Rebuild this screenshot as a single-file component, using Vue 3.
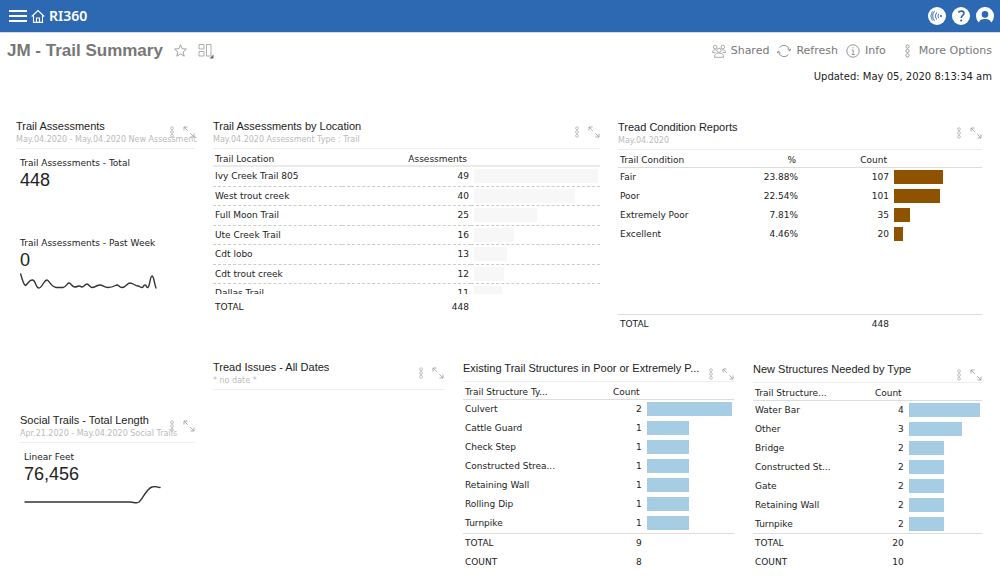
<script setup>
const metricPanels = [
  {
    id: 'assessments',
    title: 'Trail Assessments',
    sub: 'May.04.2020 - May.04.2020 New Assessment',
    metrics: [
      { label: 'Trail Assessments - Total', value: '448' },
      {
        label: 'Trail Assessments - Past Week',
        value: '0',
        path: 'M0.700 2C2 7 4 13 5.500 13.500C7 13 9 8 12 8C16 7 15 16 19 16C22 16 24 8 27 8C29 8 31 15 36 15.500H43C46 15.500 47 11 49 11C51 11 52 15 55 15C57 15 57 14 59 14C61 14 61 15 62 15C64 15 65 12 67 12C69 12 70 15.500 72 15.500C75 15.500 77 13 80 13C83 13 84 15.500 88 15.500C94 15.500 95 13 97 13C99 13 99 15.500 102 15.500C106 15.500 107 11 110 11C113 11 115 14 118 14C120 14 120 15.500 122 15.500C124 15.500 123 13 125 13C127 13 126 16 128 15.500C130 14 130 4 132 4C134 4 134 11 136 16',
      },
    ],
  },
  {
    id: 'social',
    title: 'Social Trails - Total Length',
    sub: 'Apr.21.2020 - May.04.2020 Social Trails',
    metrics: [
      {
        label: 'Linear Feet',
        value: '76,456',
        path: 'M1 16H106C110 16 112 18 115 16C119 13 122 3 128 1C131 0 133 1 136 1.500',
      },
    ],
  },
]

const scaled = (rows, max) =>
  rows.map(([name, ...values]) => ({
    name,
    values,
    width: (Number(values[values.length - 1]) / max) * 100 + '%',
  }))

const reportRows = [
  {
    id: 'upper',
    panels: [
      {
        id: 'location',
        title: 'Trail Assessments by Location',
        sub: 'May.04.2020 Assessment Type : Trail',
        heads: ['Trail Location', 'Assessments'],
        rows: scaled(
          [
            ['Ivy Creek Trail 805', '49'],
            ['West trout creek', '40'],
            ['Full Moon Trail', '25'],
            ['Ute Creek Trail', '16'],
            ['Cdt lobo', '13'],
            ['Cdt trout creek', '12'],
            ['Dallas Trail', '11'],
          ],
          49
        ),
        totals: [['TOTAL', '448']],
      },
      {
        id: 'condition',
        title: 'Tread Condition Reports',
        sub: 'May.04.2020',
        heads: ['Trail Condition', '%', 'Count'],
        rows: scaled(
          [
            ['Fair', '23.88%', '107'],
            ['Poor', '22.54%', '101'],
            ['Extremely Poor', '7.81%', '35'],
            ['Excellent', '4.46%', '20'],
          ],
          188
        ),
        totals: [['TOTAL', '', '448']],
      },
    ],
  },
  {
    id: 'lower',
    panels: [
      { id: 'issues', title: 'Tread Issues - All Dates', sub: '* no date *' },
      {
        id: 'existing',
        title: 'Existing Trail Structures in Poor or Extremely P...',
        heads: ['Trail Structure Ty...', 'Count'],
        rows: scaled(
          [
            ['Culvert', '2'],
            ['Cattle Guard', '1'],
            ['Check Step', '1'],
            ['Constructed Strea...', '1'],
            ['Retaining Wall', '1'],
            ['Rolling Dip', '1'],
            ['Turnpike', '1'],
          ],
          2
        ),
        totals: [['TOTAL', '9'], ['COUNT', '8']],
      },
      {
        id: 'needed',
        title: 'New Structures Needed by Type',
        heads: ['Trail Structure...', 'Count'],
        rows: scaled(
          [
            ['Water Bar', '4'],
            ['Other', '3'],
            ['Bridge', '2'],
            ['Constructed St...', '2'],
            ['Gate', '2'],
            ['Retaining Wall', '2'],
            ['Turnpike', '2'],
          ],
          4
        ),
        totals: [['TOTAL', '20'], ['COUNT', '10']],
      },
    ],
  },
]
</script>

<template>
  <div class="page">
    <svg class="defs" aria-hidden="true">
      <symbol id="dots" viewBox="0 0 6 12">
        <g fill="none" stroke="currentColor" stroke-width="0.6">
          <circle cx="3" cy="2.200" r="1.400" /><circle cx="3" cy="6" r="1.400" /><circle cx="3" cy="9.800" r="1.400" />
        </g>
      </symbol>
      <symbol id="expand" viewBox="0 0 12 12">
        <path d="M1 4.500V1H4.500M1 1L4.700 4.700M11 7.500V11H7.500M11 11L7.300 7.300" fill="none" stroke="currentColor" stroke-width="0.8" />
      </symbol>
    </svg>

    <header class="topbar">
      <button class="icon" aria-label="Menu">
        <svg width="18" height="12" viewBox="0 0 18 12"><path d="M0 1H18M0 6H18M0 11H18" stroke="#fff" stroke-width="2" /></svg>
      </button>
      <a class="brand" href="#">
        <svg width="14" height="14" viewBox="0 0 14 14" fill="none" stroke="#fff" stroke-width="1.100">
          <path d="M0.700 7.500L7 1.500L13.300 7.500M2.500 6V13.400H11.500V6M5.500 13V9H8.500V13" />
        </svg>
        <span>RI360</span>
      </a>
      <div class="account">
        <button class="icon" aria-label="Broadcast">
          <svg width="18" height="18" viewBox="0 0 18 18">
            <circle cx="9" cy="9" r="9" fill="#fff" />
            <circle cx="13" cy="9" r="1.100" fill="#2d69b3" />
            <path d="M10.800 6.800Q9 9 10.800 11.200M8.700 5.300Q5.800 9 8.700 12.700M6.500 4Q2.800 9 6.500 14M4.400 4.500Q1.400 9 4.400 13.500" fill="none" stroke="#2d69b3" stroke-width="0.9" />
          </svg>
        </button>
        <button class="icon" aria-label="Help">
          <svg width="18" height="18" viewBox="0 0 18 18">
            <circle cx="9" cy="9" r="9" fill="#fff" />
            <path d="M6.300 5.500C7.500 3.500 12 3.500 12 6.300C12 8.500 9.200 8.300 9.200 11" fill="none" stroke="#2d69b3" stroke-width="1.600" />
            <circle cx="9.200" cy="13.600" r="1.100" fill="#2d69b3" />
          </svg>
        </button>
        <button class="icon" aria-label="Profile">
          <svg width="18" height="18" viewBox="0 0 18 18">
            <path d="M2.900 15.600A9 9 0 1 1 15.100 15.600C14.500 13 12.500 12 9 12C5.500 12 3.500 13 2.900 15.600Z" fill="#fff" />
            <circle cx="9" cy="7.400" r="3.300" fill="#2d69b3" />
          </svg>
        </button>
      </div>
    </header>

    <div class="titlebar">
      <h1>JM - Trail Summary</h1>
      <button class="icon" aria-label="Favorite">
        <svg width="13" height="13" viewBox="0 0 13 13"><path d="M6.500 0.800L8.200 4.700L12.400 5.100L9.200 7.900L10.200 12.200L6.500 9.900L2.800 12.200L3.800 7.900L0.600 5.100L4.800 4.700Z" fill="none" stroke="#999" stroke-width="0.9" /></svg>
      </button>
      <button class="icon" aria-label="Layout">
        <svg width="16" height="16" viewBox="0 0 16 16">
          <path d="M1 1.500H6V6H1ZM1 8.500H6V13H1ZM8.500 1.500H13V13H8.500Z" fill="none" stroke="#999" stroke-width="0.8" />
          <path d="M15.500 11.500V15.500H11.500Z" fill="#666" />
        </svg>
      </button>
      <nav class="actions">
        <button>
          <svg width="14" height="14" viewBox="0 0 14 14" fill="none" stroke="#999" stroke-width="0.8">
            <circle cx="3.200" cy="3" r="1.800" /><circle cx="10.800" cy="3" r="1.800" /><circle cx="7" cy="6.300" r="2.100" />
            <path d="M0.500 8.500C0.500 6 2.500 5.300 4.500 6M13.500 8.500C13.500 6 11.500 5.300 9.500 6M0.500 8.500H3.500M13.500 8.500H10.500M2.500 13.300C2.500 10 4 9 7 9C10 9 11.500 10 11.500 13.300Z" />
          </svg>
          Shared
        </button>
        <button>
          <svg width="14" height="14" viewBox="0 0 14 14" fill="none" stroke="#888" stroke-width="0.9">
            <path d="M2.500 3.500A5.600 5.600 0 0 1 12.500 6.500M10.400 5L12.600 7L14 4.600M11.500 10.500A5.600 5.600 0 0 1 1.500 7.500M0 9.400L1.400 7L3.600 9" />
          </svg>
          Refresh
        </button>
        <button>
          <svg width="14" height="14" viewBox="0 0 14 14" fill="none" stroke="#888" stroke-width="0.9">
            <circle cx="7" cy="7" r="6.200" /><path d="M5.800 6H7.200V10.500M5.600 10.500H8.800M6.500 3.800H7.700" />
          </svg>
          Info
        </button>
        <button class="more">
          <svg width="7" height="14"><use href="#dots" /></svg>
          More Options
        </button>
      </nav>
    </div>
    <p class="updated">Updated: May 05, 2020 8:13:34 am</p>

    <main>
      <div class="metrics">
        <section v-for="p in metricPanels" :key="p.id" class="panel" :class="p.id">
          <div class="head">
            <h2>{{ p.title }}</h2>
            <p>{{ p.sub }}</p>
            <div class="tools">
              <button class="icon" aria-label="Panel options"><svg width="6" height="12"><use href="#dots" /></svg></button>
              <button class="icon" aria-label="Expand panel"><svg width="12" height="12"><use href="#expand" /></svg></button>
            </div>
          </div>
          <div v-for="m in p.metrics" :key="m.label" class="metric">
            <h3>{{ m.label }}</h3>
            <strong>{{ m.value }}</strong>
            <svg v-if="m.path" width="137" height="18" viewBox="0 0 137 18">
              <path :d="m.path" fill="none" stroke="#333" stroke-width="1.400" stroke-linecap="round" />
            </svg>
          </div>
        </section>
      </div>

      <div class="reports">
        <div v-for="row in reportRows" :key="row.id" class="row" :class="row.id">
          <section v-for="p in row.panels" :key="p.id" class="panel" :class="p.id">
            <div class="head">
              <h2>{{ p.title }}</h2>
              <p v-if="p.sub">{{ p.sub }}</p>
              <div class="tools">
                <button class="icon" aria-label="Panel options"><svg width="6" height="12"><use href="#dots" /></svg></button>
                <button class="icon" aria-label="Expand panel"><svg width="12" height="12"><use href="#expand" /></svg></button>
              </div>
            </div>
            <div v-if="p.rows" class="body">
              <table>
                <thead>
                  <tr>
                    <th v-for="h in p.heads" :key="h" scope="col">{{ h }}</th>
                    <td></td>
                  </tr>
                </thead>
                <tbody>
                  <tr v-for="r in p.rows" :key="r.name">
                    <td>{{ r.name }}</td>
                    <td v-for="v in r.values" :key="v" class="num">{{ v }}</td>
                    <td class="chart"><div class="bar" :style="{ width: r.width }"></div></td>
                  </tr>
                </tbody>
              </table>
            </div>
            <table v-if="p.totals" class="totals">
              <tbody>
                <tr v-for="t in p.totals" :key="t[0]">
                  <th scope="row">{{ t[0] }}</th>
                  <td v-for="(v, i) in t.slice(1)" :key="i" class="num">{{ v }}</td>
                  <td></td>
                </tr>
              </tbody>
            </table>
          </section>
        </div>
      </div>
    </main>
  </div>
</template>

<style>
body {
  margin: 0;
  background: #fff;
}
</style>

<style scoped>
.page {
  font: 9px/12px "DejaVu Sans", Verdana, sans-serif;
  color: #222;
}
.defs {
  position: absolute;
  width: 0;
  height: 0;
}
h1, h2, h3, p {
  margin: 0;
  font-weight: normal;
}
h3 {
  font-size: 9px;
}
button {
  padding: 0;
  border: 0;
  background: none;
  font: inherit;
  color: inherit;
}
svg {
  display: block;
  flex: none;
}
.topbar {
  display: flex;
  align-items: center;
  gap: 4px;
  height: 32px;
  padding: 0 6px 0 9px;
  background: #2d69b3;
  border-bottom: 1px solid #d5dbe4;
}
.brand {
  display: flex;
  align-items: center;
  gap: 4px;
  color: #fff;
  font: 600 14px/20px "Noto Sans", sans-serif;
  text-decoration: none;
}
.account {
  display: flex;
  gap: 6px;
  margin-left: auto;
}
.titlebar {
  display: flex;
  align-items: center;
  gap: 11px;
  height: 35px;
  padding: 0 8px 0 7px;
}
h1 {
  color: #777;
  font: bold 17px/20px "Liberation Sans", Arial, sans-serif;
}
.actions {
  display: flex;
  gap: 8px;
  margin-left: auto;
}
.actions button {
  display: flex;
  align-items: center;
  gap: 5px;
  color: #777;
  font-size: 11px;
  line-height: 16px;
}
.actions .more {
  gap: 8px;
  margin-left: 10px;
}
.updated {
  padding: 0 8px;
  font-size: 10px;
  line-height: 18px;
  text-align: right;
}
main {
  display: grid;
  grid-template-columns: 179px 1fr;
  gap: 18px;
  padding: 32px 18px 12px 16px;
}
.panel {
  display: flex;
  flex-direction: column;
  min-width: 0;
}
.head {
  position: relative;
  border-bottom: 1px solid #eee;
  padding-bottom: 2px;
  white-space: nowrap;
}
h2 {
  font: 11px/16px "Liberation Sans", Arial, sans-serif;
}
.head p {
  color: #bbb;
  font-size: 8px;
}
.existing .head,
.needed .head {
  padding-bottom: 5px;
}
.tools {
  position: absolute;
  top: 8px;
  right: 0;
  display: flex;
  gap: 8px;
  color: #999;
}
.metrics {
  display: flex;
  flex-direction: column;
}
.assessments {
  min-height: 294px;
}
.social {
  padding-left: 4px;
}
.metric {
  min-height: 72px;
  padding: 8px 0 0 4px;
}
.metric strong {
  display: block;
  font: 18px/23px "Liberation Sans", Arial, sans-serif;
}
.row {
  display: grid;
}
.upper {
  grid-template-columns: 387fr 364fr;
  gap: 18px;
  min-height: 241px;
}
.lower {
  grid-template-columns: 231fr 271fr 229fr;
  gap: 19px;
  min-height: 212px;
}
.existing,
.condition {
  padding-top: 1px;
}
.needed {
  padding-top: 2px;
}
.body {
  flex: 1;
  overflow: hidden;
}
table {
  width: 100%;
  table-layout: fixed;
  border-collapse: collapse;
}
th, td {
  height: 19px;
  padding: 0 2px;
  box-sizing: border-box;
  font-weight: normal;
  text-align: left;
  white-space: nowrap;
}
thead th, thead td {
  height: 17px;
  padding-top: 5px;
  padding-bottom: 0;
  line-height: 11px;
  border-bottom: 1px solid #ddd;
}
thead th + th {
  padding-right: 4px;
  text-align: right;
}
.num {
  text-align: right;
}
.chart {
  padding-left: 3px;
}
.bar {
  height: 14px;
  background: #a6cde3;
}
.condition .bar {
  background: #8f5300;
}
.location .bar {
  background: #f7f7f7;
}
.location .body {
  flex: none;
  height: 145px;
}
.location thead th,
.location thead td {
  border-bottom: 2px solid #eaeaea;
}
.location tbody tr:nth-child(odd) td {
  height: 20px;
}
.location .body tbody td {
  border-bottom: 1px dashed #ccc;
}
.condition .body {
  flex: none;
  height: 164px;
}
.totals {
  border-top: 1px solid #ddd;
}
.location .totals {
  margin-top: 3px;
  border-top: 0;
}
</style>
